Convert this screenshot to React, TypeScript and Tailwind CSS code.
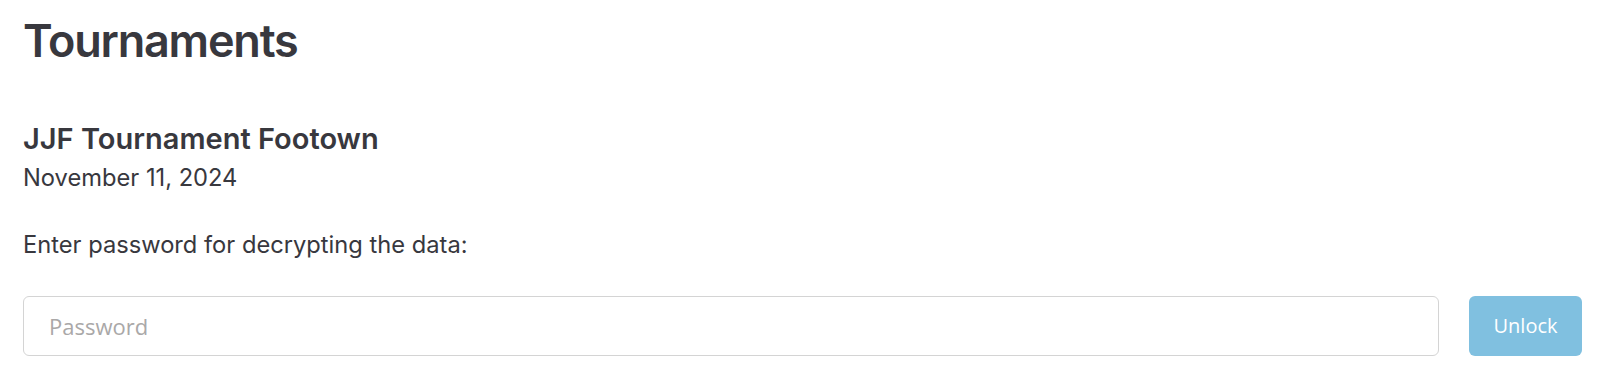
import React from 'react'

const App = () => {
  return (
    <div className="min-h-screen bg-white px-[23px] pt-[12px] text-[#38383e] font-['Inter',sans-serif]">
      {/* ---------- Page title ---------- */}
      <h1 className="text-[45px] font-semibold leading-[57px] tracking-[-1.2px]">Tournaments</h1>

      {/* ---------- Tournament info ---------- */}
      <div className="mt-[52px]">
        <h4 className="text-[29px] font-semibold leading-[36px]">JJF Tournament Footown</h4>
        <p className="mt-[7px] text-[23.7px] leading-[28px]">November 11, 2024</p>
      </div>

      <p className="mt-[39px] text-[23.7px] leading-[28px]">Enter password for decrypting the data:</p>

      {/* ---------- Password form ---------- */}
      <form className="mt-[37px] flex items-center gap-[30px]" onSubmit={(e) => e.preventDefault()}>
        <input
          type="password"
          placeholder="Password"
          className="h-[60px] flex-1 rounded-[6px] border border-[#d4d4d4] bg-white px-[25px] text-[22px] font-['Open_Sans',sans-serif] text-[#333] outline-none placeholder:text-[#aaa8a8]"
        />
        <button
          type="submit"
          disabled
          className="h-[60px] w-[113px] rounded-[6px] bg-[#80c0e0] text-[20px] font-['Open_Sans',sans-serif] text-white"
        >
          Unlock
        </button>
      </form>
    </div>
  )
}

export default App
